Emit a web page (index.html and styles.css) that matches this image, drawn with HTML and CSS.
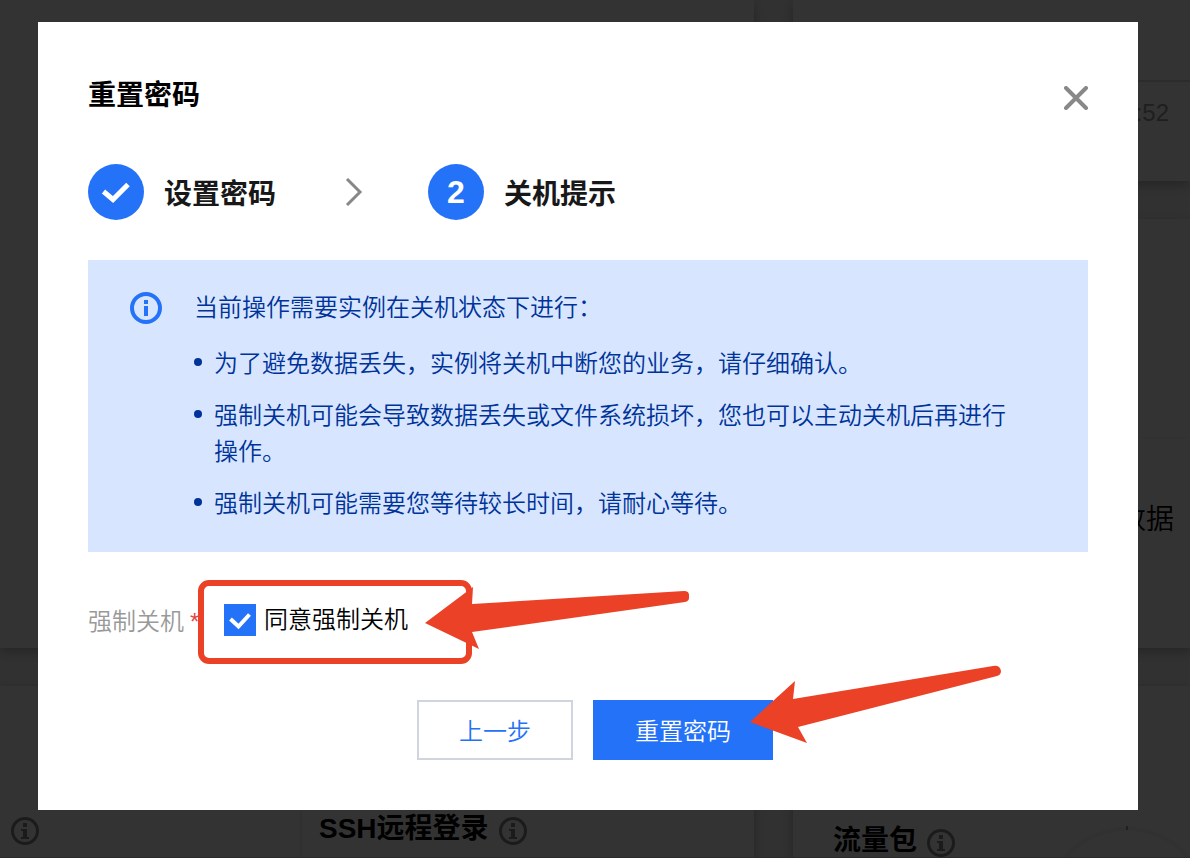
FILE: index.html
```html
<!DOCTYPE html>
<html lang="zh-CN">
<head>
    <meta charset="UTF-8">
    <meta name="viewport" content="width=device-width, initial-scale=1.0">
    <title>重置密码</title>
    <link rel="stylesheet" href="styles.css">
</head>
<body>

<div class="page">
    <div class="column">
        <section class="card card-top"></section>
        <section class="card card-bottom">
            <div class="cell cell-small">
                <svg class="tip" viewBox="0 0 28 28"><circle cx="14" cy="14" r="12.500"/><path d="M12 6h4v4h-4zM10 12h6v8h2v2h-8v-2h2v-6h-2z"/></svg>
            </div>
            <div class="cell">
                <h3>SSH远程登录</h3>
                <svg class="tip" viewBox="0 0 28 28"><circle cx="14" cy="14" r="12.500"/><path d="M12 6h4v4h-4zM10 12h6v8h2v2h-8v-2h2v-6h-2z"/></svg>
            </div>
        </section>
    </div>
    <div class="column">
        <section class="card card-time">
            <div class="time-head"></div>
            <div class="time-row">:52</div>
        </section>
        <section class="card card-data">
            <div class="data-row">数据</div>
        </section>
        <section class="card card-traffic">
            <div class="cell cell-traffic">
                <h3>流量包</h3>
                <svg class="tip" viewBox="0 0 28 28"><circle cx="14" cy="14" r="12.500"/><path d="M12 6h4v4h-4zM10 12h6v8h2v2h-8v-2h2v-6h-2z"/></svg>
            </div>
            <svg class="donut" viewBox="0 0 168 168"><circle cx="84" cy="84" r="81"/><path d="M84 0v4"/></svg>
        </section>
    </div>
</div>

<div class="overlay">
    <div class="modal" role="dialog" aria-labelledby="modalTitle">
        <header class="modal-header">
            <h2 id="modalTitle">重置密码</h2>
            <button class="close" type="button" aria-label="关闭">
                <svg viewBox="0 0 24 24"><path d="M2 2l20 20M22 2L2 22"/></svg>
            </button>
        </header>

        <ol class="steps">
            <li class="step">
                <span class="step-icon">
                    <svg viewBox="0 0 56 56"><path d="M15.500 27.500l9.500 8 15-15"/></svg>
                </span>
                <span class="step-title">设置密码</span>
            </li>
            <li class="step-arrow">
                <svg viewBox="0 0 18 28"><path d="M2 1l13 13L2 27"/></svg>
            </li>
            <li class="step">
                <span class="step-icon">2</span>
                <span class="step-title">关机提示</span>
            </li>
        </ol>

        <div class="alert">
            <svg class="alert-icon" viewBox="0 0 32 32"><circle cx="16" cy="16" r="14"/><path d="M14 8h4v4h-4zM14 14h4v10h-4z"/></svg>
            <div class="alert-text">
                <p>当前操作需要实例在关机状态下进行：</p>
                <ul>
                    <li>为了避免数据丢失，实例将关机中断您的业务，请仔细确认。</li>
                    <li>强制关机可能会导致数据丢失或文件系统损坏，您也可以主动关机后再进行操作。</li>
                    <li>强制关机可能需要您等待较长时间，请耐心等待。</li>
                </ul>
            </div>
        </div>

        <form>
            <div class="form-row">
                <span class="form-label">强制关机<em>*</em></span>
                <input type="checkbox" id="agree" checked>
                <label for="agree">同意强制关机</label>
            </div>
            <div class="buttons">
                <button class="btn" type="button">上一步</button>
                <button class="btn btn-primary" type="button">重置密码</button>
            </div>
        </form>

        <!-- highlight box and pointers over the form -->
        <svg class="marks" viewBox="0 0 1100 788">
            <rect x="163" y="561" width="268" height="78" rx="8"/>
            <path d="M387 601L435 565L434 582L646 569Q651 569 651 573V576Q651 579 647 580L434 610L441 627Z"/>
            <path d="M712 700L757 659L755 677L955 644Q962 643 963 649Q963 653 959 654L760 705L769 721Z"/>
        </svg>
    </div>
</div>

</body>
</html>
```
FILE: styles.css
```css
* {
    box-sizing: border-box;
}
body {
    margin: 0;
    height: 100vh;
    overflow: hidden;
    font-family: "Liberation Sans", "Noto Sans CJK SC", sans-serif;
    font-size: 24px;
    font-weight: 350;
    line-height: 36px;
    color: #000;
}
h2, h3, p, ul, ol {
    margin: 0;
    padding: 0;
}
h2, h3 {
    font-size: 28px;
    line-height: 40px;
}
ul, ol {
    list-style: none;
}
button, input {
    font: inherit;
    margin: 0;
}

/* page behind the dialog */
.page {
    display: grid;
    grid-template-columns: 19fr 10fr;
    gap: 39px;
    height: 100vh;
    overflow: hidden;
    background: #f2f3f3;
    border-bottom: 1px solid #d8d0d2;
}
.column {
    display: flex;
    flex-direction: column;
    gap: 38px;
    min-width: 0;
}
.card {
    background: #fff;
    box-shadow: 0 4px 10px rgba(0, 0, 0, 0.24);
}
.card-top {
    height: 648px;
}
.card-bottom {
    display: flex;
    height: 172px;
}
.cell {
    display: flex;
    align-items: flex-end;
    gap: 10px;
    padding: 0 17px 13px;
}
.cell-small {
    width: 302px;
    padding-left: 11px;
    border-right: 2px solid #eee;
}
.tip {
    width: 28px;
    height: 28px;
    flex: none;
    fill: #888;
}
.tip circle {
    fill: none;
    stroke: #888;
    stroke-width: 3;
}
.cell h3 {
    line-height: 32px;
}
.card-time {
    height: 181px;
}
.time-head {
    height: 82px;
    border-bottom: 2px solid #ddd;
}
.time-row {
    padding: 13px 21px;
    text-align: right;
    font-weight: 400;
    color: #999;
}
.card-data {
    height: 429px;
    padding-top: 218px;
}
.data-row {
    padding: 64px 16px;
    border-top: 1px solid #f4f4f4;
    text-align: right;
    font-size: 28px;
}
.card-traffic {
    display: flex;
    justify-content: space-between;
    height: 172px;
}
.cell-traffic {
    padding: 0 0 1px 40px;
}
.donut {
    width: 168px;
    height: 168px;
    flex: none;
    margin: 140px -21px 0 0;
    fill: none;
    stroke: #f2f2f2;
    stroke-width: 4;
}
.donut path {
    stroke: #2050d0;
    stroke-width: 1;
}

/* dialog */
.overlay {
    position: fixed;
    inset: 0;
    padding: 22px 52px 48px 38px;
    background: rgba(0, 0, 0, 0.8);
}
.modal {
    position: relative;
    padding: 50px;
    background: #fff;
}
.modal-header {
    display: flex;
    justify-content: space-between;
    align-items: center;
    height: 48px;
}
.close {
    width: 24px;
    height: 24px;
    margin-top: 4px;
    padding: 0;
    border: none;
    background: none;
    cursor: pointer;
}
.close svg {
    display: block;
    fill: none;
    stroke: #888;
    stroke-width: 4;
    stroke-linecap: round;
}
.steps {
    display: flex;
    align-items: center;
    margin-top: 44px;
    font-size: 28px;
    font-weight: bold;
    color: #181818;
}
.step {
    display: flex;
    align-items: center;
    gap: 20px;
}
.step-title {
    padding-top: 6px;
}
.step-icon {
    width: 56px;
    height: 56px;
    border-radius: 50%;
    background: #2472f8;
    color: #fff;
    font-size: 32px;
    line-height: 56px;
    text-align: center;
}
.step-icon svg {
    display: block;
    fill: none;
    stroke: #fff;
    stroke-width: 5;
}
.step-arrow {
    width: 18px;
    height: 28px;
    margin: 0 65px 0 69px;
}
.step-arrow svg {
    display: block;
    fill: none;
    stroke: #888;
    stroke-width: 3;
}
.alert {
    display: flex;
    gap: 32px;
    margin-top: 40px;
    padding: 30px 64px 30px 42px;
    background: #d7e6fe;
    color: #003399;
}
.alert-icon {
    width: 32px;
    height: 32px;
    flex: none;
    margin-top: 2px;
    fill: #2472f8;
}
.alert-icon circle {
    fill: none;
    stroke: #2472f8;
    stroke-width: 4;
}
.alert li {
    position: relative;
    margin-top: 16px;
    padding-left: 20px;
}
.alert li:first-child {
    margin-top: 20px;
}
.alert li::before {
    content: "";
    position: absolute;
    left: 0;
    top: 12px;
    width: 8px;
    height: 8px;
    border-radius: 50%;
    background: #003399;
}
.form-row {
    display: flex;
    align-items: center;
    height: 36px;
    margin-top: 50px;
}
.form-label {
    width: 136px;
    padding-top: 4px;
    color: #999;
}
.form-label em {
    margin-left: 6px;
    font-style: normal;
    color: #e54545;
}
.form-row input {
    appearance: none;
    width: 32px;
    height: 32px;
    margin-right: 8px;
    background: #2472f8 url("data:image/svg+xml,%3Csvg xmlns='http://www.w3.org/2000/svg' viewBox='0 0 32 32'%3E%3Cpath d='M6.500 15l8 7.500 11-12' fill='none' stroke='%23fff' stroke-width='4'/%3E%3C/svg%3E");
}
.buttons {
    display: flex;
    justify-content: center;
    gap: 20px;
    margin-top: 62px;
    padding-left: 14px;
}
.btn {
    height: 60px;
    padding: 4px 40px 0;
    border: 2px solid #cfd5de;
    background: #fff;
    color: #2472f8;
    cursor: pointer;
}
.btn-primary {
    border-color: #2472f8;
    background: #2472f8;
    color: #fff;
}
.marks {
    position: absolute;
    left: 0;
    top: 0;
    width: 1100px;
    height: 788px;
    fill: #eb4126;
    pointer-events: none;
}
.marks rect {
    fill: none;
    stroke: #eb4126;
    stroke-width: 6;
}
```
